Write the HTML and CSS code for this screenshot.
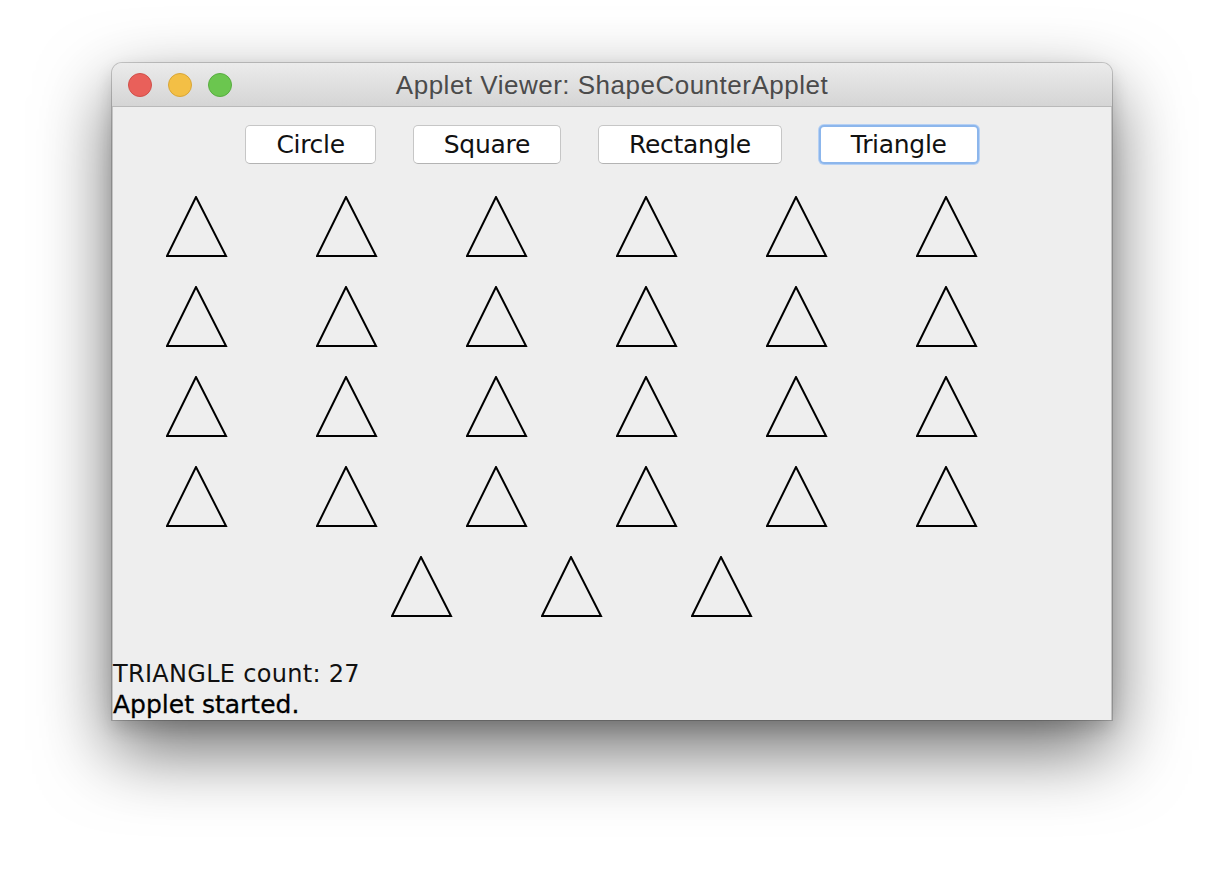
FILE: index.html
```html
<!DOCTYPE html>
<html>
<head>
<meta charset="utf-8">
<title>Applet Viewer: ShapeCounterApplet</title>
<link rel="stylesheet" href="styles.css">
</head>
<body>
<div class="window">
  <div class="titlebar">
    <div class="lights">
      <span class="light red"></span>
      <span class="light yellow"></span>
      <span class="light green"></span>
    </div>
    <div class="title">Applet Viewer: ShapeCounterApplet</div>
  </div>
  <div class="content">
    <div class="buttons">
      <button class="btn">Circle</button>
      <button class="btn">Square</button>
      <button class="btn">Rectangle</button>
      <button class="btn focused">Triangle</button>
    </div>
    <div class="shapes">
      <div class="cell"><svg class="tri" width="62" height="62" viewBox="0 0 62 62"><polygon points="30,1 1,60 60,60"/></svg></div>
      <div class="cell"><svg class="tri" width="62" height="62" viewBox="0 0 62 62"><polygon points="30,1 1,60 60,60"/></svg></div>
      <div class="cell"><svg class="tri" width="62" height="62" viewBox="0 0 62 62"><polygon points="30,1 1,60 60,60"/></svg></div>
      <div class="cell"><svg class="tri" width="62" height="62" viewBox="0 0 62 62"><polygon points="30,1 1,60 60,60"/></svg></div>
      <div class="cell"><svg class="tri" width="62" height="62" viewBox="0 0 62 62"><polygon points="30,1 1,60 60,60"/></svg></div>
      <div class="cell"><svg class="tri" width="62" height="62" viewBox="0 0 62 62"><polygon points="30,1 1,60 60,60"/></svg></div>
      <div class="cell"><svg class="tri" width="62" height="62" viewBox="0 0 62 62"><polygon points="30,1 1,60 60,60"/></svg></div>
      <div class="cell"><svg class="tri" width="62" height="62" viewBox="0 0 62 62"><polygon points="30,1 1,60 60,60"/></svg></div>
      <div class="cell"><svg class="tri" width="62" height="62" viewBox="0 0 62 62"><polygon points="30,1 1,60 60,60"/></svg></div>
      <div class="cell"><svg class="tri" width="62" height="62" viewBox="0 0 62 62"><polygon points="30,1 1,60 60,60"/></svg></div>
      <div class="cell"><svg class="tri" width="62" height="62" viewBox="0 0 62 62"><polygon points="30,1 1,60 60,60"/></svg></div>
      <div class="cell"><svg class="tri" width="62" height="62" viewBox="0 0 62 62"><polygon points="30,1 1,60 60,60"/></svg></div>
      <div class="cell"><svg class="tri" width="62" height="62" viewBox="0 0 62 62"><polygon points="30,1 1,60 60,60"/></svg></div>
      <div class="cell"><svg class="tri" width="62" height="62" viewBox="0 0 62 62"><polygon points="30,1 1,60 60,60"/></svg></div>
      <div class="cell"><svg class="tri" width="62" height="62" viewBox="0 0 62 62"><polygon points="30,1 1,60 60,60"/></svg></div>
      <div class="cell"><svg class="tri" width="62" height="62" viewBox="0 0 62 62"><polygon points="30,1 1,60 60,60"/></svg></div>
      <div class="cell"><svg class="tri" width="62" height="62" viewBox="0 0 62 62"><polygon points="30,1 1,60 60,60"/></svg></div>
      <div class="cell"><svg class="tri" width="62" height="62" viewBox="0 0 62 62"><polygon points="30,1 1,60 60,60"/></svg></div>
      <div class="cell"><svg class="tri" width="62" height="62" viewBox="0 0 62 62"><polygon points="30,1 1,60 60,60"/></svg></div>
      <div class="cell"><svg class="tri" width="62" height="62" viewBox="0 0 62 62"><polygon points="30,1 1,60 60,60"/></svg></div>
      <div class="cell"><svg class="tri" width="62" height="62" viewBox="0 0 62 62"><polygon points="30,1 1,60 60,60"/></svg></div>
      <div class="cell"><svg class="tri" width="62" height="62" viewBox="0 0 62 62"><polygon points="30,1 1,60 60,60"/></svg></div>
      <div class="cell"><svg class="tri" width="62" height="62" viewBox="0 0 62 62"><polygon points="30,1 1,60 60,60"/></svg></div>
      <div class="cell"><svg class="tri" width="62" height="62" viewBox="0 0 62 62"><polygon points="30,1 1,60 60,60"/></svg></div>
      <div class="cell"><svg class="tri" width="62" height="62" viewBox="0 0 62 62"><polygon points="30,1 1,60 60,60"/></svg></div>
      <div class="cell"><svg class="tri" width="62" height="62" viewBox="0 0 62 62"><polygon points="30,1 1,60 60,60"/></svg></div>
      <div class="cell"><svg class="tri" width="62" height="62" viewBox="0 0 62 62"><polygon points="30,1 1,60 60,60"/></svg></div>
    </div>
    <div class="count">TRIANGLE count: 27</div>
    <div class="status">Applet started.</div>
  </div>
</div>
</body>
</html>
```

FILE: styles.css
```css
html, body {
  margin: 0;
  padding: 0;
  background: #ffffff;
}

body {
  width: 1224px;
  height: 880px;
  overflow: hidden;
  font-family: "DejaVu Sans", "Noto Sans", sans-serif;
}

.window {
  margin: 63px 0 0 112px;
  width: 1000px;
  height: 657px;
  display: flex;
  flex-direction: column;
  border-radius: 10px 10px 0 0;
  box-shadow: 0 0 0 1px rgba(0, 0, 0, 0.18), 0 30px 72px rgba(0, 0, 0, 0.58), 0 8px 18px rgba(0, 0, 0, 0.14);
  background: #eeeeee;
}

.titlebar {
  height: 43px;
  flex: none;
  display: flex;
  align-items: center;
  border-bottom: 1px solid #b9b9b9;
  border-radius: 10px 10px 0 0;
  background: linear-gradient(#ebebeb, #d5d5d5);
}

.lights {
  display: flex;
  gap: 16px;
  padding-left: 16px;
  width: 220px;
  flex: none;
  box-sizing: border-box;
}

.light {
  width: 24px;
  height: 24px;
  border-radius: 50%;
  box-sizing: border-box;
}

.red { background: #e9605a; border: 1px solid #d0504a; }
.yellow { background: #f3bf45; border: 1px solid #d9a637; }
.green { background: #6bc64f; border: 1px solid #58ad40; }

.title {
  flex: 1;
  margin-left: -220px;
  text-align: center;
  font-family: "Liberation Sans", Arial, sans-serif;
  font-size: 26px;
  letter-spacing: 0.5px;
  color: #4b4b4b;
  padding-top: 2px;
}

.content {
  flex: 1;
  display: flex;
  flex-direction: column;
  border-left: 1px solid #c4c4c4;
  border-right: 1px solid #c4c4c4;
}

.buttons {
  display: flex;
  justify-content: center;
  gap: 37px;
  padding-top: 18px;
}

.btn {
  height: 39px;
  padding: 0 30px;
  margin: 0;
  background: #ffffff;
  border: 1px solid #c6c6c6;
  border-bottom-color: #b3b3b3;
  border-radius: 5px;
  font-family: "DejaVu Sans", sans-serif;
  font-size: 25px;
  letter-spacing: -0.3px;
  color: #111111;
  line-height: 37px;
}

.btn.focused {
  border: 2px solid #8cb6ec;
  box-shadow: 0 0 0 1px #b5d0f4;
  line-height: 35px;
}

.shapes {
  display: flex;
  flex-wrap: wrap;
  justify-content: center;
  margin-top: 32px;
}

.cell {
  width: 150px;
  height: 90px;
}

.tri {
  display: block;
  margin-left: 4px;
}

.tri polygon {
  fill: none;
  stroke: #000000;
  stroke-width: 2;
  stroke-linejoin: miter;
}

.count {
  margin-top: auto;
  font-size: 24px;
  letter-spacing: 0.3px;
  line-height: 32px;
  color: #111111;
}

.status {
  font-size: 25px;
  line-height: 30px;
  color: #000000;
  -webkit-text-stroke: 0.3px #000;
}
```
